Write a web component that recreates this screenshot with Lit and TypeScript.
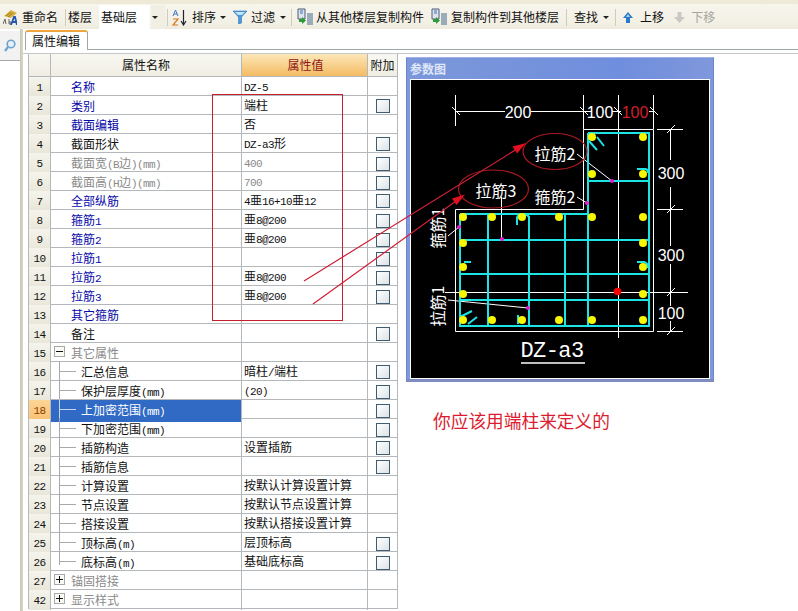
import { LitElement, css, html, svg } from "lit";
import { customElement } from "lit/decorators.js";

interface Row {
    no: number,
    name: string,
    value?: string,
    tone?: 'blue' | 'black' | 'gray',
    check?: boolean,
    tree?: boolean,
    fold?: '+' | '-',
    selected?: boolean,
    last?: boolean
}

const RB = '亜';

const rows: Row[] = [
    { no: 1, name: '名称', value: 'DZ-5', tone: 'blue' },
    { no: 2, name: '类别', value: '端柱', tone: 'blue', check: true },
    { no: 3, name: '截面编辑', value: '否', tone: 'blue' },
    { no: 4, name: '截面形状', value: 'DZ-a3形', tone: 'black', check: true },
    { no: 5, name: '截面宽(B边)(mm)', value: '400', tone: 'gray', check: true },
    { no: 6, name: '截面高(H边)(mm)', value: '700', tone: 'gray', check: true },
    { no: 7, name: '全部纵筋', value: `4${RB}16+10${RB}12`, tone: 'blue', check: true },
    { no: 8, name: '箍筋1', value: `${RB}8@200`, tone: 'blue', check: true },
    { no: 9, name: '箍筋2', value: `${RB}8@200`, tone: 'blue', check: true },
    { no: 10, name: '拉筋1', tone: 'blue', check: true },
    { no: 11, name: '拉筋2', value: `${RB}8@200`, tone: 'blue', check: true },
    { no: 12, name: '拉筋3', value: `${RB}8@200`, tone: 'blue', check: true },
    { no: 13, name: '其它箍筋', tone: 'blue' },
    { no: 14, name: '备注', tone: 'black', check: true },
    { no: 15, name: '其它属性', tone: 'gray', fold: '-' },
    { no: 16, name: '汇总信息', value: '暗柱/端柱', tree: true, check: true },
    { no: 17, name: '保护层厚度(mm)', value: '(20)', tree: true, check: true },
    { no: 18, name: '上加密范围(mm)', tree: true, check: true, selected: true },
    { no: 19, name: '下加密范围(mm)', tree: true, check: true },
    { no: 20, name: '插筋构造', value: '设置插筋', tree: true, check: true },
    { no: 21, name: '插筋信息', tree: true, check: true },
    { no: 22, name: '计算设置', value: '按默认计算设置计算', tree: true },
    { no: 23, name: '节点设置', value: '按默认节点设置计算', tree: true },
    { no: 24, name: '搭接设置', value: '按默认搭接设置计算', tree: true },
    { no: 25, name: '顶标高(m)', value: '层顶标高', tree: true, check: true },
    { no: 26, name: '底标高(m)', value: '基础底标高', tree: true, check: true, last: true },
    { no: 27, name: '锚固搭接', tone: 'gray', fold: '+' },
    { no: 42, name: '显示样式', tone: 'gray', fold: '+' },
];

// SimSun style text: latin runs are half width, so they get their own font
function mixed(text: string) {
    return text.split(/([\x00-\x7f]+)/).filter(s => s).map(s =>
        /^[\x00-\x7f]/.test(s) ? html`<span class="lat">${s}</span>` : s);
}

const dots: [number, number][] = [
    [463, 217], [492, 217], [522, 217], [559, 217], [592, 217], [643, 217],
    [463, 243], [463, 267], [463, 294], [463, 320],
    [643, 243], [643, 267], [643, 294], [643, 320],
    [492, 320], [522, 320], [559, 320], [592, 320],
    [592, 137], [643, 137], [592, 174], [643, 174],
];

const pins: [number, number][] = [[612, 181], [587, 203], [459, 227], [502, 239], [528, 308]];

const diagram = svg`
    <g fill="none" stroke="#fff" stroke-width="1">
        <path d="M455.5 209.5H583.5V129.5H653.5V331.5H455.5Z" />
        <path d="M455.5 95V126M583.5 95V129M618.5 95V338M653.5 95V129" />
        <path d="M456 111.5H505M531 111.5H592M612 111.5H621M649 111.5H653" />
        <path d="M452 107L460 115M580 107L588 115M614 107L622 115M650 107L658 115" />
        <path d="M657 129.5H683M657 209.5H683M657 331.5H683M445 292.5H688" />
        <path d="M670.5 129.5V160M670.5 187V246M670.5 264V306M670.5 321V331" />
        <path d="M667 133L675 125M667 213L675 205M667 296L675 288M667 335L675 327" />
        <path d="M577 154L612 181M577 197L587 203M501.5 197V239M448 236L459 227M448 300L528 308" />
    </g>
    <g fill="none" stroke="#1de4e4" stroke-width="2">
        <path d="M460 214H588M588 133H649V326H460V214" />
        <path d="M588 133V326M488 214V326M529 216V326M565 214V326" />
        <path d="M460 240H649M460 274H649M460 300H649M588 181H649" />
        <path d="M589 141L597 150M597 137L604 146" />
        <path d="M637 169H645Q648 169 648 173M464 262H471M637 262H644Q648 263 648 268" />
        <path d="M517 225V218Q517 215 522 215H526Q529 215 529 219" />
        <path d="M460 317L472 311M468 324L477 317M518 324V315" />
    </g>
    <g fill="#f6f600">
        ${dots.map(([x, y]) => svg`<circle cx=${x} cy=${y} r="4" />`)}
    </g>
    <g fill="#e81ad0">
        ${pins.map(([x, y]) => svg`<circle cx=${x} cy=${y} r="2" />`)}
    </g>
    <circle cx="617.5" cy="291.5" r="3.8" fill="#f40000" />
    <g class="cad-num" fill="#fff">
        <text x="518" y="117.5">200</text>
        <text x="600" y="117.5">100</text>
        <text x="635" y="117.5" fill="#d21e28">100</text>
        <text x="671" y="179">300</text>
        <text x="671" y="261">300</text>
        <text x="671" y="318.500">100</text>
    </g>
    <g class="cad-cn" fill="#fff">
        <text x="555" y="160">拉筋2</text>
        <text x="496" y="197">拉筋3</text>
        <text x="555" y="203">箍筋2</text>
        <text transform="translate(444 228) rotate(-90)">箍筋1</text>
        <text transform="translate(444 306) rotate(-90)">拉筋1</text>
    </g>
    <text class="cad-title" x="552" y="357" fill="#fff">DZ-a3</text>
    <path d="M521 363H585" stroke="#fff" stroke-width="1.5" />
`;

@customElement('app-root')
export class AppRoot extends LitElement {

    static styles = css`
        :host {
            display: block;
            position: relative;
            width: 798px;
            height: 611px;
            overflow: hidden;
            background: #fff;
            color: #111;
            font: 12px/18px "Noto Sans CJK SC", "Liberation Sans", sans-serif;
        }

        .lat {
            font-family: "Liberation Mono", monospace;
            font-size: 11px;
            letter-spacing: -0.6px;
        }

        .page {
            display: flex;
            flex-direction: column;
            height: 611px;
        }

        /* toolbar */
        .toolbar {
            display: flex;
            align-items: center;
            flex: none;
            box-sizing: border-box;
            height: 29px;
            padding: 1px 0 0 3px;
            border-top: 4px solid #efe9d7;
            background: linear-gradient(#f7f5ec, #f3f1e6 70%, #eeebdd);
            white-space: nowrap;
        }

        .toolbar svg {
            flex: none;
            display: block;
        }

        .sep {
            flex: none;
            width: 1px;
            height: 17px;
            background: #cfccbc;
        }

        .caret {
            flex: none;
            width: 0;
            height: 0;
            border: 3px solid transparent;
            border-top: 3px solid #222;
            border-bottom: 0;
        }

        .combo {
            display: flex;
            justify-content: space-between;
            align-items: center;
            box-sizing: border-box;
            width: 66px;
            height: 24px;
            padding: 0 7px 0 2px;
            background: linear-gradient(90deg, #fff 75%, #f1efe4 80%);
        }

        .off { color: #a5a5a0; }
        .m2 { margin-left: 2px; }
        .m3 { margin-left: 3px; }
        .m4 { margin-left: 4px; }
        .m5 { margin-left: 5px; }
        .m6 { margin-left: 6px; }
        .m7 { margin-left: 7px; }
        .m8 { margin-left: 8px; }
        .m10 { margin-left: 10px; }

        /* below the toolbar */
        .content {
            display: flex;
            flex: 1;
            min-height: 0;
        }

        .side {
            flex: none;
            width: 20px;
        }

        .search {
            display: flex;
            align-items: center;
            justify-content: center;
            box-sizing: border-box;
            height: 30px;
            margin-top: 2px;
            background: #f2f2f2;
            border-bottom: 1px solid #a9a9a9;
        }

        .rail {
            flex: none;
            width: 3px;
            background: linear-gradient(90deg, #c9c5b0, #dcd9c9);
        }

        .main {
            flex: 1;
            min-width: 0;
        }

        .tabs {
            display: flex;
            box-sizing: border-box;
            height: 24px;
            padding: 1px 0 0 2px;
        }

        .tab {
            box-sizing: border-box;
            width: 63px;
            height: 20px;
            padding-left: 6px;
            border: 1px solid #9ea6a6;
            border-top: 2px solid #eea53c;
            border-bottom: 0;
            border-radius: 3px 3px 0 0;
            line-height: 18px;
        }

        .tabline {
            flex: 1;
            height: 20px;
            box-sizing: border-box;
            border-bottom: 1px solid #9ea6a6;
        }

        .tabbody {
            display: flex;
            border-top: 1px solid #c4c8c8;
        }

        /* property grid */
        .grid {
            flex: none;
            box-sizing: border-box;
            width: 370px;
            margin-left: 5px;
            border-left: 1px solid #b4b8bc;
            border-right: 1px solid #b4b8bc;
        }

        .row {
            display: grid;
            grid-template-columns: 21px 191px 126px 30px;
            height: 19px;
            box-sizing: border-box;
            border-bottom: 1px solid #b4b8bc;
        }

        .row > div {
            box-sizing: border-box;
            border-left: 1px solid #b4b8bc;
            min-width: 0;
            white-space: nowrap;
        }

        .row > div:first-child {
            border-left: 0;
        }

        .head {
            height: 23px;
            line-height: 22px;
            text-align: center;
            background: linear-gradient(#f8f7f1, #f0eee3);
        }

        .head .val {
            background: linear-gradient(#fce7b8, #f4bb62);
            color: #8f1616;
        }

        .no {
            text-align: center;
            background: linear-gradient(#f5f4ec, #e8e6d8);
        }

        .no.hot {
            background: linear-gradient(#fcd595, #f9c070);
            color: #8a3a00;
        }

        .name {
            position: relative;
            padding-left: 20px;
            line-height: 20px;
        }

        .blue { color: #0808a8; }
        .gray { color: #8a8a8a; }
        .black { color: #111; }

        .name.tree {
            padding-left: 30px;
        }

        .name.tree::before {
            content: "";
            position: absolute;
            left: 8px;
            top: -1px;
            bottom: -1px;
            border-left: 1px solid #a8a8a8;
        }

        .name.tree.last::before {
            bottom: 9px;
        }

        .name.tree::after {
            content: "";
            position: absolute;
            left: 8px;
            top: 9px;
            width: 17px;
            border-top: 1px solid #a8a8a8;
        }

        .name.sel {
            background: #316ac5;
            color: #fff;
        }

        .name.sel::before, .name.sel::after {
            border-color: #c6d4ee;
        }

        .fold {
            position: absolute;
            left: 3px;
            top: 3px;
            box-sizing: border-box;
            width: 11px;
            height: 11px;
            border: 1px solid #a8a8a8;
            background: #fbfbf6;
        }

        .fold::before, .fold.plus::after {
            content: "";
            position: absolute;
            background: #111;
        }

        .fold::before {
            left: 1px;
            top: 4px;
            width: 7px;
            height: 1px;
        }

        .fold.plus::after {
            left: 4px;
            top: 1px;
            width: 1px;
            height: 7px;
        }

        .val {
            padding-left: 2px;
        }

        .extra {
            display: flex;
            align-items: center;
            justify-content: center;
            padding-left: 1px;
        }

        .check {
            box-sizing: border-box;
            width: 14px;
            height: 14px;
            border: 1px solid #3f5c70;
            background: linear-gradient(135deg, #fff, #dde3e6);
        }

        /* parameter picture */
        .right {
            flex: none;
            margin: 3px 0 0 8px;
        }

        .figure {
            box-sizing: border-box;
            width: 308px;
            height: 325px;
            padding: 0 3px;
            background: #7f97dc;
            border: 1px solid #6d86c8;
            border-bottom: 3px solid #7e8cc0;
            border-top-color: #9fb1e6;
        }

        .figure-title {
            height: 21px;
            line-height: 21px;
            font-size: 12px;
            font-weight: 700;
            color: #dfe6f8;
            background: linear-gradient(90deg, #7c97da, #6f8edd 70%, #7f97dc);
        }

        .figure svg {
            display: block;
            box-sizing: border-box;
            width: 300px;
            height: 300px;
            background: #000;
            border: 1px solid #fff;
        }

        .cad-num {
            font: 16px "Liberation Sans", sans-serif;
            text-anchor: middle;
        }

        .cad-cn {
            font: 16px "Noto Sans CJK SC", sans-serif;
            text-anchor: middle;
        }

        .cad-title {
            font: 22px "Liberation Mono", monospace;
            letter-spacing: -0.6px;
            text-anchor: middle;
        }

        .note {
            margin: 26px 0 0 27px;
            font-size: 17.7px;
            line-height: 24px;
            color: #dc1c30;
            white-space: nowrap;
        }

        /* hand drawn marks on top of the screenshot */
        .marks {
            position: absolute;
            left: 0;
            top: 0;
            width: 798px;
            height: 611px;
            pointer-events: none;
        }
    `

    private renderRow(r: Row) {
        const tone = r.selected ? '' : (r.tone ?? 'black');
        return html`
            <div class="row">
                <div class="no ${r.selected ? 'hot' : ''}">${mixed(String(r.no))}</div>
                <div class="name ${tone} ${r.tree ? 'tree' : ''} ${r.last ? 'last' : ''} ${r.selected ? 'sel' : ''}">
                    ${r.fold ? html`<span class="fold ${r.fold === '+' ? 'plus' : ''}"></span>` : ''}${mixed(r.name)}
                </div>
                <div class="val ${r.tone === 'gray' ? 'gray' : ''}">${mixed(r.value ?? '')}</div>
                <div class="extra">${r.check ? html`<span class="check"></span>` : ''}</div>
            </div>
        `;
    }

    private renderToolbar() {
        return html`
            <div class="toolbar">
                <svg width="14" height="15" viewBox="0 0 14 15">
                    <path d="M1 6L8 0L14 3L8 8Z" fill="#d9b23c" />
                    <path d="M3 6L8 2M5 7L10 3" stroke="#7d6a20" stroke-width="0.7" />
                    <path d="M0 14L2 9L3 14M6 9V14H8V12H6" fill="none" stroke="#666" stroke-width="1" />
                    <path d="M8 15L11 7H12L14 15M9.500 12H13" fill="none" stroke="#2458b0" stroke-width="1.800" />
                </svg>
                <span class="m5">重命名</span>
                <span class="sep m7"></span>
                <span class="m2">楼层</span>
                <div class="combo m7"><span>基础层</span><span class="caret"></span></div>
                <span class="sep m2"></span>
                <svg class="m4" width="15" height="17" viewBox="0 0 15 17">
                    <path d="M1 7L3.500 1L6 7M2 5H5" fill="none" stroke="#3c78c8" stroke-width="1" />
                    <path d="M1 10H6L1 16H6" fill="none" stroke="#d87820" stroke-width="1.200" />
                    <path d="M11.500 1V15M9 12L11.500 16L14 12" fill="none" stroke="#223" stroke-width="1.200" />
                </svg>
                <span class="m5">排序</span>
                <span class="caret m4"></span>
                <svg class="m7" width="14" height="14" viewBox="0 0 14 14">
                    <path d="M0 1H14L8.500 7V13L5.500 14V7Z" fill="#4a9ad8" stroke="#2f78b8" stroke-width="0.600" />
                    <path d="M2 2H12L9 5H5Z" fill="#bfe2f6" />
                </svg>
                <span class="m4">过滤</span>
                <span class="caret m5"></span>
                <span class="sep m5"></span>
                ${this.copyIcon('m5')}
                <span class="m3">从其他楼层复制构件</span>
                ${this.copyIcon('m7')}
                <span class="m4">复制构件到其他楼层</span>
                <span class="sep m7"></span>
                <span class="m7">查找</span>
                <span class="caret m5"></span>
                <span class="sep m6"></span>
                <svg class="m7" width="10" height="11" viewBox="0 0 10 11">
                    <path d="M5 0L10 6H7V11H3V6H0Z" fill="#2a78c8" />
                    <path d="M5 2L7 5H3Z" fill="#a8d0f0" />
                </svg>
                <span class="m7">上移</span>
                <svg class="m10" width="11" height="11" viewBox="0 0 11 11">
                    <path d="M3.500 0H7.500V5H11L5.500 11L0 5H3.500Z" fill="#c8c8c4" />
                </svg>
                <span class="m6 off">下移</span>
            </div>
        `;
    }

    private copyIcon(margin: string) {
        return html`
            <svg class=${margin} width="16" height="18" viewBox="0 0 16 18">
                <path d="M1 1H8V11H1Z" fill="#dfe4ea" stroke="#4a5a78" stroke-width="1" />
                <path d="M3 3H6M3 5H6" stroke="#3070c8" stroke-width="1" />
                <path d="M2 11H5V9L9 12.500L5 16V14H2Z" fill="#2e9a3c" />
                <path d="M10 6H16M10 8H16M10 10H16M10 12H16M10 14H16M10 16H16" stroke="#41648c" stroke-width="1" />
            </svg>
        `;
    }

    render() {
        return html`
            <div class="page">
                ${this.renderToolbar()}
                <div class="content">
                    <div class="side">
                        <div class="search">
                            <svg width="12" height="13" viewBox="0 0 12 13">
                                <circle cx="7" cy="5" r="3.800" fill="#e6f0f8" stroke="#6ea4cc" stroke-width="1.600" />
                                <path d="M4 8L1 12" stroke="#6ea4cc" stroke-width="2.200" />
                            </svg>
                        </div>
                    </div>
                    <div class="rail"></div>
                    <div class="main">
                        <div class="tabs">
                            <div class="tab">属性编辑</div>
                            <div class="tabline"></div>
                        </div>
                        <div class="tabbody">
                            <div class="grid">
                                <div class="row head">
                                    <div></div>
                                    <div>属性名称</div>
                                    <div class="val">属性值</div>
                                    <div>附加</div>
                                </div>
                                ${rows.map(r => this.renderRow(r))}
                            </div>
                            <div class="right">
                                <div class="figure">
                                    <div class="figure-title">参数图</div>
                                    <svg viewBox="411 80 298 298">${diagram}</svg>
                                </div>
                                <div class="note">你应该用端柱来定义的</div>
                            </div>
                        </div>
                    </div>
                </div>
            </div>
            <svg class="marks" viewBox="0 0 798 611">
                <rect x="212.500" y="94.500" width="130" height="226" fill="none" stroke="#c4202c" stroke-width="1" />
                <g fill="none" stroke="#a81a20" stroke-width="1.200">
                    <ellipse cx="555" cy="151.500" rx="32" ry="18" />
                    <ellipse cx="493.500" cy="189" rx="35" ry="19" />
                </g>
                <path d="M304 281L517 149M313 304L456 201" fill="none" stroke="#d02038" stroke-width="1.200" />
                <path d="M526 143L517 153.500L512.500 146.500ZM465 194.500L456.500 205L452 198.500Z" fill="#e01020" />
            </svg>
        `;
    }
}
